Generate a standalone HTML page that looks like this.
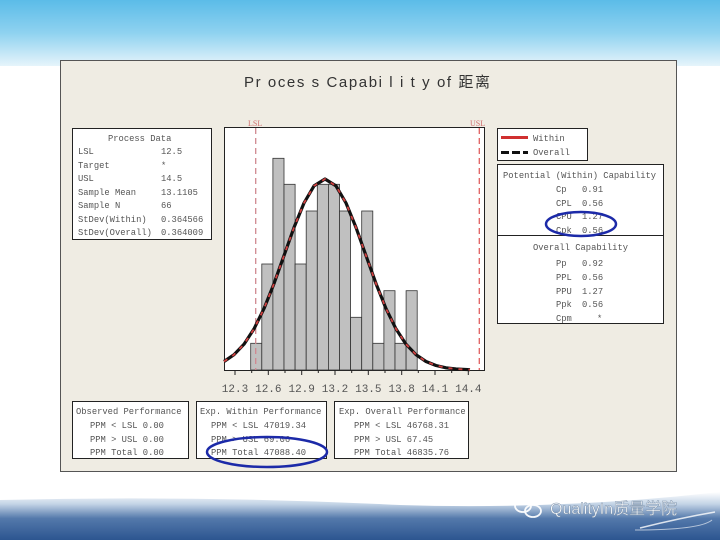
<!DOCTYPE html>
<html><head><meta charset="utf-8"><style>
html,body{margin:0;padding:0;width:720px;height:540px;overflow:hidden;background:#fff}
svg{display:block}
.m{font-family:"Liberation Mono",monospace;font-size:8.8px;fill:#555}
</style></head><body>
<svg width="720" height="540" viewBox="0 0 720 540" xmlns="http://www.w3.org/2000/svg">
<defs>
<linearGradient id="sky" x1="0" y1="0" x2="0" y2="1">
<stop offset="0" stop-color="#5bbce8"/><stop offset="0.5" stop-color="#8fd2f0"/><stop offset="1" stop-color="#e6f4fb"/>
</linearGradient>
<linearGradient id="sea" x1="0" y1="0" x2="0" y2="1">
<stop offset="0" stop-color="#ffffff"/><stop offset="0.25" stop-color="#c4d4e6"/><stop offset="0.55" stop-color="#5479ab"/><stop offset="1" stop-color="#2c5590"/>
</linearGradient>
</defs>
<rect x="0" y="0" width="720" height="66" fill="url(#sky)"/>
<path d="M0 500 Q200 495 400 505 Q560 510 720 492 L720 540 L0 540 Z" fill="url(#sea)"/>
<path d="M640 528 Q680 518 715 512" stroke="#fff" stroke-width="1.5" fill="none" opacity="0.8"/>
<path d="M635 530 Q700 530 712 520" stroke="#fff" stroke-width="1" fill="none" opacity="0.6"/>
<rect x="60.5" y="60.5" width="616" height="411" fill="#efece3" stroke="#555" stroke-width="1"/>
<text x="244" y="87" font-family="Liberation Sans,'Noto Sans CJK SC',sans-serif" font-size="15" fill="#333" textLength="246" lengthAdjust="spacing">Pr oces s  Capabi l i t y  of  距离</text>
<rect x="72.5" y="128.5" width="139" height="111" fill="#fff" stroke="#222"/>
<g class="m">
<text x="108" y="141">Process Data</text>
<text x="78" y="154">LSL</text><text x="161" y="154">12.5</text>
<text x="78" y="168">Target</text><text x="161" y="168">*</text>
<text x="78" y="181">USL</text><text x="161" y="181">14.5</text>
<text x="78" y="195">Sample Mean</text><text x="161" y="195">13.1105</text>
<text x="78" y="208">Sample N</text><text x="161" y="208">66</text>
<text x="78" y="222">StDev(Within)</text><text x="161" y="222">0.364566</text>
<text x="78" y="235">StDev(Overall)</text><text x="161" y="235">0.364009</text>
</g>
<rect x="224.5" y="127.5" width="260" height="243" fill="#fff" stroke="#222"/>
<g fill="#c0c0c0" stroke="#333" stroke-width="0.8">
<rect x="250.7" y="343.3" width="11.1" height="26.7"/>
<rect x="261.8" y="264" width="11.1" height="106"/>
<rect x="272.9" y="158.3" width="11.1" height="211.7"/>
<rect x="284" y="184.3" width="11.1" height="185.7"/>
<rect x="295.1" y="264" width="11.1" height="106"/>
<rect x="306.2" y="211" width="11.1" height="159"/>
<rect x="317.3" y="184.3" width="11.1" height="185.7"/>
<rect x="328.4" y="184.3" width="11.1" height="185.7"/>
<rect x="339.5" y="211" width="11.1" height="159"/>
<rect x="350.6" y="317.3" width="11.1" height="52.7"/>
<rect x="361.7" y="211" width="11.1" height="159"/>
<rect x="372.8" y="343.3" width="11.1" height="26.7"/>
<rect x="383.9" y="290.7" width="11.1" height="79.3"/>
<rect x="395" y="343.3" width="11.1" height="26.7"/>
<rect x="406.1" y="290.7" width="11.1" height="79.3"/>
</g>
<line x1="255.7" y1="128" x2="255.7" y2="370" stroke="#d08890" stroke-width="1.3" stroke-dasharray="6,4"/>
<line x1="479.3" y1="128" x2="479.3" y2="370" stroke="#e06060" stroke-width="1.3" stroke-dasharray="6,4"/>
<text x="248" y="126" font-family="Liberation Serif,serif" font-size="8" fill="#d07070">LSL</text>
<text x="470" y="126" font-family="Liberation Serif,serif" font-size="8" fill="#d07070">USL</text>
<polyline fill="none" stroke="#111" stroke-width="3.2" stroke-linejoin="round" points="224,361.5 234,354.7 244,344.2 254,328.9 264,308.6 274,283.6 284,255.6 294,227.5 304,203 314,185.9 325,179 336,185.9 346,203 356,227.5 366,255.6 376,283.6 386,308.6 396,328.9 406,344.2 416,354.7 426,361.5 436,365.5 446,367.8 456,369 470,369.7"/>
<polyline fill="none" stroke="#d04040" stroke-width="1.8" stroke-dasharray="4,6" stroke-linejoin="round" points="224,361.5 234,354.7 244,344.2 254,328.9 264,308.6 274,283.6 284,255.6 294,227.5 304,203 314,185.9 325,179 336,185.9 346,203 356,227.5 366,255.6 376,283.6 386,308.6 396,328.9 406,344.2 416,354.7 426,361.5 436,365.5 446,367.8 456,369 470,369.7"/>
<g stroke="#222" stroke-width="1">
<line x1="235" y1="370" x2="235" y2="375"/><line x1="251.7" y1="370" x2="251.7" y2="373"/>
<line x1="268.3" y1="370" x2="268.3" y2="375"/><line x1="285" y1="370" x2="285" y2="373"/>
<line x1="301.7" y1="370" x2="301.7" y2="375"/><line x1="318.3" y1="370" x2="318.3" y2="373"/>
<line x1="335" y1="370" x2="335" y2="375"/><line x1="351.7" y1="370" x2="351.7" y2="373"/>
<line x1="368.3" y1="370" x2="368.3" y2="375"/><line x1="385" y1="370" x2="385" y2="373"/>
<line x1="401.7" y1="370" x2="401.7" y2="375"/><line x1="418.3" y1="370" x2="418.3" y2="373"/>
<line x1="435" y1="370" x2="435" y2="375"/><line x1="451.7" y1="370" x2="451.7" y2="373"/>
<line x1="468.3" y1="370" x2="468.3" y2="375"/>
</g>
<g font-family="Liberation Mono,monospace" font-size="11" fill="#555" text-anchor="middle">
<text x="235" y="392">12.3</text><text x="268.3" y="392">12.6</text><text x="301.7" y="392">12.9</text>
<text x="335" y="392">13.2</text><text x="368.3" y="392">13.5</text><text x="401.7" y="392">13.8</text>
<text x="435" y="392">14.1</text><text x="468.3" y="392">14.4</text>
</g>
<rect x="497.5" y="128.5" width="90" height="32" fill="#fff" stroke="#222"/>
<line x1="501" y1="137.5" x2="528" y2="137.5" stroke="#d03030" stroke-width="3"/>
<line x1="501" y1="152.5" x2="528" y2="152.5" stroke="#111" stroke-width="3" stroke-dasharray="8,3"/>
<text class="m" x="533" y="141">Within</text>
<text class="m" x="533" y="155">Overall</text>
<rect x="497.5" y="164.5" width="166" height="159" fill="#fff" stroke="#222"/>
<line x1="498" y1="235.5" x2="663" y2="235.5" stroke="#222"/>
<g class="m">
<text x="503" y="178">Potential (Within) Capability</text>
<text x="556" y="192">Cp</text><text x="582" y="192">0.91</text>
<text x="556" y="206">CPL</text><text x="582" y="206">0.56</text>
<text x="556" y="219">CPU</text><text x="582" y="219">1.27</text>
<text x="556" y="233">Cpk</text><text x="582" y="233">0.56</text>
<text x="533" y="250">Overall Capability</text>
<text x="556" y="266">Pp</text><text x="582" y="266">0.92</text>
<text x="556" y="280">PPL</text><text x="582" y="280">0.56</text>
<text x="556" y="294">PPU</text><text x="582" y="294">1.27</text>
<text x="556" y="307">Ppk</text><text x="582" y="307">0.56</text>
<text x="556" y="321">Cpm</text><text x="597" y="321">*</text>
</g>
<ellipse cx="581" cy="224" rx="35" ry="12" fill="none" stroke="#1c2aa8" stroke-width="2.5"/>
<rect x="72.5" y="401.5" width="116" height="57" fill="#fff" stroke="#222"/>
<rect x="196.5" y="401.5" width="130" height="57" fill="#fff" stroke="#222"/>
<rect x="334.5" y="401.5" width="134" height="57" fill="#fff" stroke="#222"/>
<g class="m">
<text x="76" y="414">Observed Performance</text>
<text x="90" y="428">PPM &lt; LSL  0.00</text>
<text x="90" y="442">PPM &gt; USL  0.00</text>
<text x="90" y="455">PPM Total  0.00</text>
<text x="200" y="414">Exp. Within Performance</text>
<text x="211" y="428">PPM &lt; LSL 47019.34</text>
<text x="211" y="442">PPM &gt; USL     69.06</text>
<text x="211" y="455">PPM Total 47088.40</text>
<text x="339" y="414">Exp. Overall Performance</text>
<text x="354" y="428">PPM &lt; LSL 46768.31</text>
<text x="354" y="442">PPM &gt; USL     67.45</text>
<text x="354" y="455">PPM Total 46835.76</text>
</g>
<ellipse cx="267" cy="452" rx="60" ry="15" fill="none" stroke="#1c2aa8" stroke-width="2.5"/>
<g fill="none" stroke="#fff" stroke-width="1.8" opacity="0.95">
<ellipse cx="523" cy="506" rx="8" ry="6"/>
<ellipse cx="533" cy="511" rx="8" ry="6"/>
</g>
<text x="550" y="514" font-family="Liberation Sans,'Noto Sans CJK SC',sans-serif" font-size="16" fill="#fff" stroke="#7f94ad" stroke-width="0.5">QualityIn质量学院</text>
</svg>
</body></html>
